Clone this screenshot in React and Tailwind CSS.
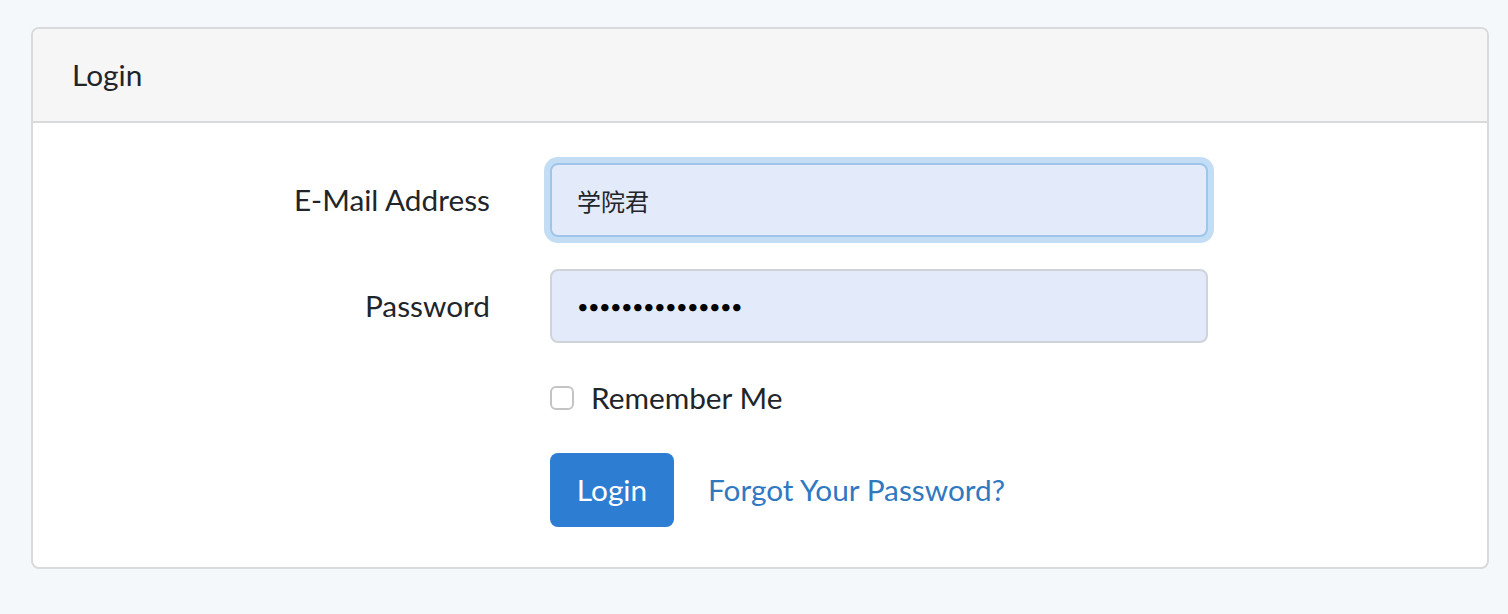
import React from "react";

export default function App() {
  const font = { fontFamily: "Lato, 'Noto Sans CJK SC', sans-serif" };
  return (
    <div className="min-h-[614px] w-full bg-[#f5f8fa] pt-[27px] pl-[31px] pr-[19px] text-[#212529]" style={font}>
      <div className="w-[1458px] rounded-[8px] border-2 border-[#d8dadc] bg-white">
        <div className="rounded-t-[6px] border-b-2 border-[#d8dadc] bg-[#f6f6f6] px-[39px] py-[23px] text-[29.8px] leading-[46px]">
          Login
        </div>
        <div className="p-[40px]">
          <form onSubmit={(e) => e.preventDefault()}>
            <div className="mb-[32px] flex items-center">
              <label className="w-[448px] pr-[31px] text-right text-[29.8px] leading-[46px]">E-Mail Address</label>
              <div className="ml-[29px] w-[658px]">
                <input
                  type="text"
                  readOnly
                  value="学院君"
                  className="block h-[74px] w-full rounded-[8px] border-2 border-[#9fc6ea] bg-[#e3ebfb] px-[25px] text-[24px] text-[#212529] shadow-[0_0_0_6px_rgba(52,144,220,0.3)] outline-none"
                  style={font}
                />
              </div>
            </div>
            <div className="mb-[32px] flex items-center">
              <label className="w-[448px] pr-[31px] text-right text-[29.8px] leading-[46px]">Password</label>
              <div className="ml-[29px] w-[658px]">
                <div className="flex h-[74px] w-full items-center rounded-[8px] border-2 border-[#ced4da] bg-[#e3ebfb] px-[25px] text-[20px] tracking-[-0.6px] text-black">
                  •••••••••••••••
                </div>
              </div>
            </div>
            <div className="mb-[32px] flex">
              <div className="ml-[477px] flex h-[46px] items-center">
                <span className="mr-[17px] block h-[24px] w-[24px] rounded-[6px] border-2 border-[#c4c4c4] bg-white" />
                <span className="text-[29.8px] leading-[46px]">Remember Me</span>
              </div>
            </div>
            <div className="flex items-center">
              <div className="ml-[477px] flex items-center">
                <button
                  type="submit"
                  className="h-[74px] w-[124px] rounded-[8px] bg-[#2d7dd2] text-[29.8px] text-white"
                  style={font}
                >
                  Login
                </button>
                <a href="#" className="ml-[34px] text-[29.8px] text-[#3079c1]">
                  Forgot Your Password?
                </a>
              </div>
            </div>
          </form>
        </div>
      </div>
    </div>
  );
}
